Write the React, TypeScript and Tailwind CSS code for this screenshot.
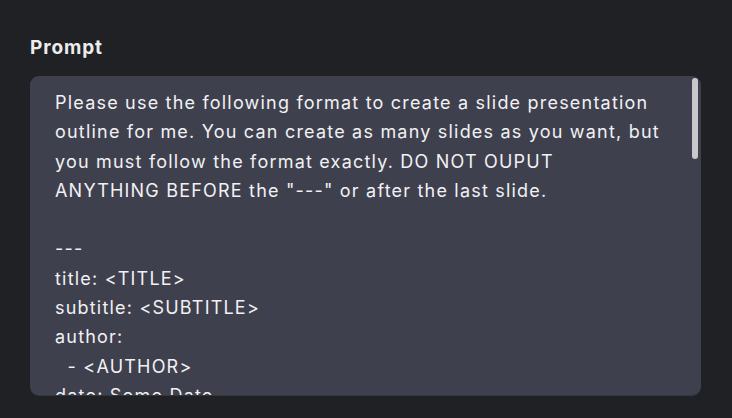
const lines = [
  'Please use the following format to create a slide presentation',
  'outline for me. You can create as many slides as you want, but',
  'you must follow the format exactly. DO NOT OUPUT',
  'ANYTHING BEFORE the "---" or after the last slide.',
  '',
  '---',
  'title: <TITLE>',
  'subtitle: <SUBTITLE>',
  'author:',
  '  - <AUTHOR>',
  'date: Some Date',
  'slide_number: true',
];

const App = () => {
  return (
    <div
      className="w-full min-h-screen bg-[#202124] pt-[36px] pl-[30px] pr-[31px]"
      style={{ fontFamily: 'Inter, "Noto Sans", sans-serif' }}
    >
      <label className="block text-[19px] font-bold leading-[24px] tracking-[0.9px] text-[#ececec]">Prompt</label>

      <div className="relative mt-[16px] h-[320px] overflow-hidden rounded-[9px] bg-[#3f404e] border-b border-[#34353f]">
        <div className="pt-[12px] pl-[25px] pr-[30px] text-[18px] leading-[29.3px] tracking-[1.2px] text-[#f1f1f3]">
          {lines.map((line, i) => (
            <div key={i} className="whitespace-pre h-[29.3px]">
              {line}
            </div>
          ))}
        </div>
        {/* scrollbar thumb */}
        <div className="absolute right-[3px] top-[2px] h-[81px] w-[6px] rounded-full bg-[#c8c8cc]" />
      </div>
    </div>
  );
};

export default App;
